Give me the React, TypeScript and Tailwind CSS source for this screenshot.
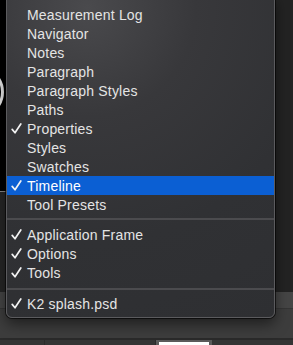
type Item = { label: string; checked?: boolean; active?: boolean };

const groups: Item[][] = [
  [
    { label: "Measurement Log" },
    { label: "Navigator" },
    { label: "Notes" },
    { label: "Paragraph" },
    { label: "Paragraph Styles" },
    { label: "Paths" },
    { label: "Properties", checked: true },
    { label: "Styles" },
    { label: "Swatches" },
    { label: "Timeline", checked: true, active: true },
    { label: "Tool Presets" },
  ],
  [
    { label: "Application Frame", checked: true },
    { label: "Options", checked: true },
    { label: "Tools", checked: true },
  ],
  [{ label: "K2 splash.psd", checked: true }],
];

function Check() {
  return (
    <svg width="11" height="11" viewBox="0 0 11 11" className="shrink-0">
      <path d="M1.2 6.4 L4 9.8 L9.8 1" fill="none" stroke="#f2f2f2" strokeWidth="1.7" strokeLinecap="round" strokeLinejoin="round" />
    </svg>
  );
}

function Row({ item }: { item: Item }) {
  return (
    <div
      className={`flex items-center h-[19px] ${item.active ? "bg-[#0b5fd3] text-white" : "text-[#e4e4e4]"}`}
    >
      <div className="w-[20px] flex justify-end pr-[5px]">{item.checked && <Check />}</div>
      <span className="text-[14px] tracking-[0.2px] leading-none">{item.label}</span>
    </div>
  );
}

export default function App() {
  return (
    <div
      className="relative w-[293px] h-[345px] overflow-hidden flex flex-col bg-[#3c3c3c]"
      style={{ fontFamily: '"Liberation Sans", Arial, sans-serif' }}
    >
      {/* window behind the menu */}
      <div className="h-[292px] flex">
        <div className="relative w-[6px] flex flex-col">
          <div className="h-[191px] bg-black"></div>
          <div className="h-[1px] bg-[#8a8a8a]"></div>
          <div className="flex-1 bg-[#262626]"></div>
          <div className="absolute left-[-52px] top-[66px] w-[56px] h-[52px] rounded-full border-[3px] border-[#e8e8e8]"></div>
        </div>
        <div className="flex-1 bg-[#2a2a2a]"></div>
        <div className="w-[18px] bg-[#232323]"></div>
      </div>
      <div className="h-[16px] bg-[#454545]"></div>
      <div className="h-[1px] bg-[#353535]"></div>
      <div className="h-[29px] bg-[#3d3d3d]"></div>
      <div className="h-[2px] bg-[#2a2a2a]"></div>
      <div className="flex-1 flex bg-[#343434]">
        <div className="w-[45px] border-r border-[#2a2a2a]"></div>
        <div className="w-[111px] border-r border-[#2a2a2a]"></div>
        <div className="w-[56px] bg-[#5a5a5a] px-[3px] pt-[2px]">
          <div className="h-full bg-white"></div>
        </div>
      </div>

      {/* menu */}
      <div className="absolute left-[6px] top-[-6px] w-[269px] pt-[10px] pb-[4px] rounded-[6px] border border-[#5b5b5e] shadow-[0_0_0_1px_rgba(0,0,0,0.6),0_6px_14px_rgba(0,0,0,0.5)] bg-[radial-gradient(circle_at_30%_4%,#4a4a4d_0%,#38383b_30%,#303134_65%,#2e2f32_100%)]">
        {groups.map((g, gi) => (
          <div key={gi}>
            {gi > 0 && (
              <div className={gi === 1 ? "pt-[4px] pb-[5px]" : "pt-[6px] pb-[4px]"}>
                <div className="h-[2px] bg-[#4b4b4e]"></div>
              </div>
            )}
            {g.map((item) => (
              <Row key={item.label} item={item} />
            ))}
          </div>
        ))}
      </div>
    </div>
  );
}
